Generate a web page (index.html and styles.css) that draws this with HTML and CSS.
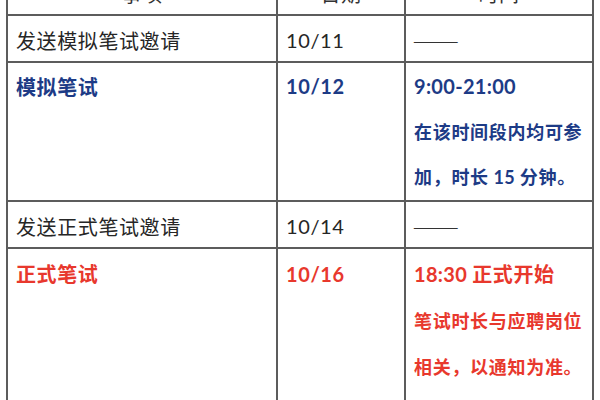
FILE: index.html
```html
<!DOCTYPE html>
<html lang="zh-CN">
<head>
<meta charset="utf-8">
<title>笔试安排</title>
<link rel="stylesheet" href="styles.css">
</head>
<body>
<table class="schedule">
  <colgroup>
    <col class="c-item">
    <col class="c-date">
    <col class="c-time">
  </colgroup>
  <thead>
    <tr class="head">
      <th>事项</th>
      <th>日期</th>
      <th>时间</th>
    </tr>
  </thead>
  <tbody>
    <tr class="single">
      <td>发送模拟笔试邀请</td>
      <td class="num">10/11</td>
      <td class="dash">——</td>
    </tr>
    <tr class="multi blue">
      <td class="strong">模拟笔试</td>
      <td class="num strong">10/12</td>
      <td>
        <div class="first num strong">9:00-21:00</div>
        <div class="note">在该时间段内均可参</div>
        <div class="note">加，时长 <span class="num">15</span> 分钟。</div>
      </td>
    </tr>
    <tr class="single">
      <td>发送正式笔试邀请</td>
      <td class="num">10/14</td>
      <td class="dash">——</td>
    </tr>
    <tr class="multi red last">
      <td class="strong">正式笔试</td>
      <td class="num strong">10/16</td>
      <td>
        <div class="first strong"><span class="num">18:30</span> 正式开始</div>
        <div class="note">笔试时长与应聘岗位</div>
        <div class="note">相关，以通知为准。</div>
        <div class="note">&nbsp;</div>
      </td>
    </tr>
  </tbody>
</table>
</body>
</html>
```

FILE: styles.css
```css
html, body {
  margin: 0;
  padding: 0;
  background: #ffffff;
  width: 600px;
  height: 400px;
  overflow: hidden;
}

body {
  font-family: "Noto Sans CJK SC", "Noto Sans", sans-serif;
  color: #262626;
}

.schedule {
  border-collapse: collapse;
  table-layout: fixed;
  width: 586px;
  margin: -29px 0 0 6px;
}

.c-item { width: 270px; }
.c-date { width: 128px; }
.c-time { width: 188px; }

.schedule th,
.schedule td {
  border: 2px solid #5c5c5c;
  padding: 4px 8px 0 8px;
  font-size: 20px;
  letter-spacing: 0.6px;
  line-height: 41px;
  vertical-align: top;
  text-align: left;
  white-space: nowrap;
  overflow: hidden;
}

.schedule th {
  text-align: center;
  font-weight: normal;
  color: #333333;
  padding: 0 8px;
  height: 41px;
}

.num {
  font-family: "Lato", "Noto Sans CJK SC", sans-serif;
  letter-spacing: 0.3px;
}

.schedule td.dash {
  font-family: "Liberation Serif", serif;
  font-size: 22px;
  letter-spacing: -0.5px;
  color: #333333;
}

.strong { font-weight: 700; }

.multi td {
  padding-top: 1px;
  line-height: 45px;
}

.last td {
  padding-top: 2px;
  line-height: 46px;
}

.first {
  font-size: 20px;
}

.note {
  font-size: 18px;
  letter-spacing: 0.7px;
  font-weight: 700;
}

.blue td { color: #1d3b86; }
.red td { color: #e8382d; }
```
